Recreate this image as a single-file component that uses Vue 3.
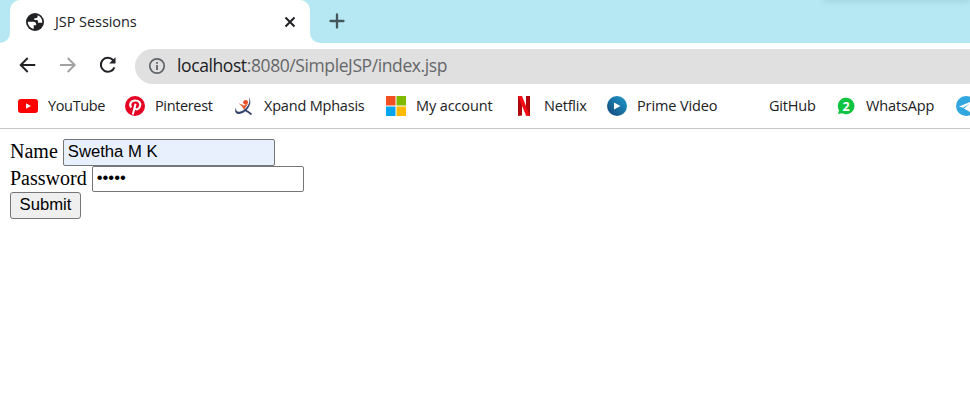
<script setup>
import { ref } from 'vue'

const name = ref('Swetha M K')
const password = ref('12345')
const bookmarks = [
  { id: 'youtube', label: 'YouTube' },
  { id: 'pinterest', label: 'Pinterest' },
  { id: 'xpand', label: 'Xpand Mphasis' },
  { id: 'microsoft', label: 'My account' },
  { id: 'netflix', label: 'Netflix' },
  { id: 'prime', label: 'Prime Video' },
  { id: 'github', label: 'GitHub' },
  { id: 'whatsapp', label: 'WhatsApp' },
  { id: 'telegram', label: '' },
]
</script>

<template>
  <div class="browser">
    <header class="tabs">
      <div class="corner left"></div>
      <div class="tab">
        <svg class="globe" viewBox="0 0 20 20">
          <circle cx="10" cy="10" r="9" fill="#202124" />
          <path fill="#fff" d="M2.800 9.800H8.500C10.300 9.800 11.200 10.700 11.200 12.500V13.300H8.700V16.900C5.300 16.400 2.800 13.500 2.800 9.800Z" />
          <path fill="#fff" d="M12.600 3.200V4.600C12.600 5.600 11.900 6.200 10.900 6.200H9.300V8.100H11.500C12.400 8.100 13 8.700 13 9.500V10.800H17.200C17.700 7.500 15.700 4.300 12.600 3.200Z" />
        </svg>
        <span class="tab-title">JSP Sessions</span>
        <svg class="close" viewBox="0 0 12 12"><path d="M1.500 1.500 10.500 10.500M10.500 1.500 1.500 10.500" fill="none" stroke="#202124" stroke-width="2" /></svg>
      </div>
      <div class="corner right"></div>
      <svg class="plus" viewBox="0 0 16 16"><path d="M8 1.500V14.500M1.500 8H14.500" stroke="#46575b" stroke-width="2.300" stroke-linecap="round" /></svg>
      <div class="window-shadow"></div>
    </header>

    <nav class="toolbar">
      <svg class="nav-icon" viewBox="0 0 20 20"><path d="M17.300 10H3M9.700 3 2.700 10 9.700 17" fill="none" stroke="#202124" stroke-width="1.900" /></svg>
      <svg class="nav-icon" viewBox="0 0 20 20"><path d="M2 10H16.500M9.700 3 16.700 10 9.700 17" fill="none" stroke="#a0a1a2" stroke-width="1.900" /></svg>
      <svg class="nav-icon" viewBox="0 0 20 20"><path d="M16.400 12.300A7 7 0 1 1 15 5L16.500 6.500" fill="none" stroke="#202124" stroke-width="2" /><path d="M17.500 2.200V8.600H11.100Z" fill="#202124" /></svg>
      <div class="address">
        <svg class="info" viewBox="0 0 18 18"><circle cx="9" cy="9" r="7.200" fill="none" stroke="#5f6368" stroke-width="1.700" /><path d="M9 8V13M9 5V6.700" stroke="#5f6368" stroke-width="1.800" /></svg>
        <span class="url"><b>localhost</b>:8080/SimpleJSP/index.jsp</span>
      </div>
    </nav>

    <nav class="bookmarks">
      <a v-for="b in bookmarks" :key="b.id" class="bookmark" :class="b.id">
        <svg class="favicon" viewBox="0 0 20 20">
          <template v-if="b.id === 'youtube'">
            <rect y="3" width="20" height="14" rx="3" fill="#f00" /><path d="M8 7.200V12.800L13 10Z" fill="#fff" />
          </template>
          <template v-else-if="b.id === 'pinterest'">
            <circle cx="10" cy="10" r="10" fill="#e60023" />
            <path d="M6.200 11.500C3.900 8.300 6 4.500 10.200 4.500C14.300 4.500 16 7.200 15 10.300C13.900 13.700 10.700 14.100 9.700 12.100M10.600 7.700 7.800 18.500" fill="none" stroke="#fff" stroke-width="2.100" />
          </template>
          <template v-else-if="b.id === 'xpand'">
            <circle cx="11.600" cy="6.300" r="2.400" fill="#e94e24" />
            <path d="M4.500 7.200C7.500 8 8.800 9 9.800 9.500L14.500 8C12.500 10 11.200 11 10.300 14.400C9 11 7 9 4.500 7.200Z" fill="#e85b2d" />
            <path d="M14.500 1.200C19.500 6 13.500 16.200 6.200 17.800C1.800 18.700 -.1 15.900 2 11.500C1.700 15.200 3.400 16.300 6.300 15.600C12.300 14.100 17.600 6.200 14.500 1.200Z" fill="#34436c" />
            <path d="M10.500 14.200C12.700 14.500 15 16.600 17.500 18.500" fill="none" stroke="#34436c" stroke-width="1.700" />
          </template>
          <template v-else-if="b.id === 'microsoft'">
            <path d="M0 0H9.500V9.500H0Z" fill="#f25022" /><path d="M10.500 0H20V9.500H10.500Z" fill="#7fba00" /><path d="M0 10.500H9.500V20H0Z" fill="#00a4ef" /><path d="M10.500 10.500H20V20H10.500Z" fill="#ffb900" />
          </template>
          <template v-else-if="b.id === 'netflix'">
            <path d="M4 0H8V19.500L4 20ZM12 0H16V20L12 19.500Z" fill="#b1060f" /><path d="M4 0H8L16 20 12 19.500Z" fill="#f20c18" />
          </template>
          <template v-else-if="b.id === 'prime'">
            <defs><linearGradient id="prime-blue" x1="1" y1="0" x2="0" y2="1"><stop stop-color="#209dcc" /><stop offset="1" stop-color="#114678" /></linearGradient></defs>
            <circle cx="10" cy="10" r="10" fill="url(#prime-blue)" /><path d="M7 6.500V13.500L13.500 10Z" fill="#fff" />
          </template>
          <template v-else-if="b.id === 'whatsapp'">
            <path d="M2 18 3 14.200A8.300 8.300 0 1 1 6.300 17.300Z" fill="#10c442" />
            <text x="10" y="14.700" text-anchor="middle" class="count">2</text>
          </template>
          <template v-else-if="b.id === 'telegram'">
            <circle cx="10" cy="10" r="10" fill="#31a6df" /><path d="M3 10.500 17 4.700 14 16 8 12.500 13.500 7.500 7 11.800Z" fill="#fff" />
          </template>
        </svg>
        <span class="label">{{ b.label }}</span>
      </a>
    </nav>

    <form class="page" @submit.prevent>
      <div class="line"><label for="name">Name</label><input id="name" v-model="name" class="filled" type="text" /></div>
      <div class="line"><label for="password">Password</label><input id="password" v-model="password" class="secret" type="password" /></div>
      <button type="submit">Submit</button>
    </form>
  </div>
</template>

<style>
body { margin: 0; background: #fff; overflow: hidden; }
</style>
<style scoped>
.browser { width: 970px; height: 413px; overflow: hidden; background: #fff; font-family: "Open Sans", "Noto Sans", sans-serif; color: #202124; }
svg { display: block; flex: none; }
.tabs { position: relative; display: flex; height: 43px; background: #b5e8f2; }
.corner { width: 10px; height: 43px; background: #fff; flex: none; }
.corner::before { content: ""; display: block; height: 43px; background: #b5e8f2; }
.left::before { border-bottom-right-radius: 10px; }
.right::before { border-bottom-left-radius: 10px; }
.tab { width: 300px; height: 43px; box-sizing: border-box; display: flex; align-items: center; padding: 0 14px 0 15px; background: #fff; border-radius: 10px 10px 0 0; }
.globe { width: 20px; height: 20px; }
.tab-title { margin-left: 10px; font-size: 14.500px; line-height: 20px; letter-spacing: -0.060px; white-space: nowrap; }
.close { width: 12px; height: 12px; margin-left: auto; }
.plus { width: 16px; height: 16px; margin: 13px 0 0 9px; }
.window-shadow { position: absolute; right: 0; top: -5px; width: 146px; height: 5px; box-shadow: 0 0 7px #527f8a55; }
.toolbar { display: flex; align-items: center; height: 45px; padding-left: 18px; }
.nav-icon { width: 20px; height: 20px; margin: -1px 20px 0 0; }
.nav-icon:nth-child(3) { margin-right: 17px; }
.address { flex: 1; height: 35px; margin-top: 1px; display: flex; align-items: center; border-radius: 18px 0 0 18px; background: #e0e0e0; padding-left: 13px; }
.info { width: 18px; height: 18px; }
.url { margin: -2px 0 0 11px; font-size: 17.500px; letter-spacing: -0.400px; color: #65676a; white-space: nowrap; }
.url b { color: #202124; font-weight: 400; }
.bookmarks { display: grid; grid-template-columns: 107px 109px 152px 128px 93px 132px 97px 120px 20px; height: 40px; padding-left: 18px; border-bottom: 1px solid #c9c9c9; align-items: center; }
.bookmark { display: flex; align-items: center; white-space: nowrap; margin-top: -4px; }
.favicon { width: 20px; height: 20px; }
.label { margin-left: 10px; font-size: 14.500px; line-height: 20px; letter-spacing: -0.120px; }
.youtube .label, .pinterest .label { letter-spacing: -0.360px; }
.xpand .label, .netflix .label, .github .label { letter-spacing: -0.200px; }
.count { font: bold 12.500px "Open Sans", sans-serif; fill: #fff; }
.page { padding: 10px 10px 0; font: 20px/26px "Liberation Serif", serif; color: #000; }
.line { display: flex; height: 26.500px; }
.line label { line-height: 24px; }
input { box-sizing: border-box; width: 212px; height: 27px; margin: 0 0 0 5px; padding: 1px 4px 3px; border: 1px solid #767676; border-radius: 2px; font: 16.667px "Liberation Sans", sans-serif; color: #000; background: #fff; outline: none; }
.filled { background: #e8f0fe; }
.secret { height: 26px; }
button { display: block; box-sizing: border-box; width: 71px; height: 27px; padding: 0 0 2px; border: 1px solid #767676; border-radius: 3px; background: #efefef; color: #000; font: 16.667px "Liberation Sans", sans-serif; }
</style>
